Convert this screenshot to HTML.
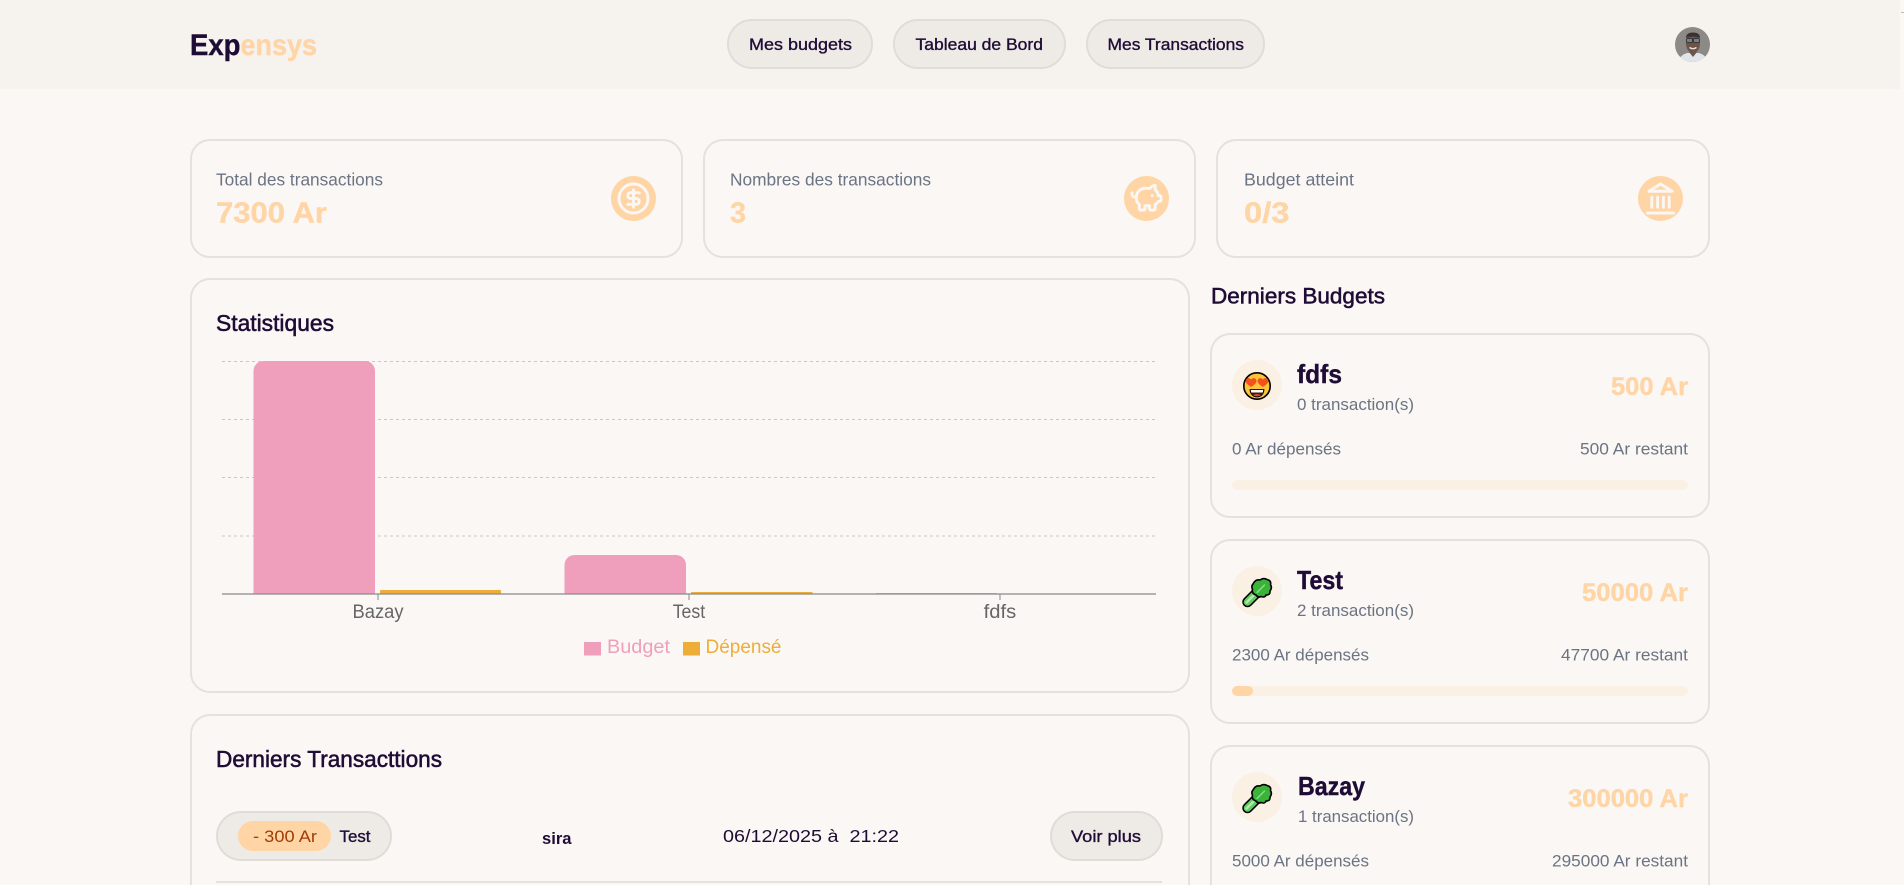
<!DOCTYPE html>
<html lang="fr">
<head>
<meta charset="utf-8">
<title>Expensys</title>
<style>
html,body{margin:0;padding:0;width:1904px;height:885px;overflow:hidden;background:#fbf7f4}
body{position:relative;font-family:"Liberation Sans",sans-serif}
.hdr{position:absolute;left:0;top:0;width:1900px;height:89px;background:#f6f2ee}
.card{position:absolute;box-sizing:border-box;border:2px solid #e5e1dc;border-radius:20px;background:#fbf7f4}
.btn{position:absolute;box-sizing:border-box;height:50px;border:2px solid #e0dcd7;border-radius:25px;background:#eeeae6}
.ic{position:absolute;border-radius:50%;background:#fbf0e4;width:50px;height:50px;left:1232px}
.bar{position:absolute;left:1232px;width:456px;height:10px;border-radius:5px;background:#fbf0e4}
.fill{position:absolute;left:0;top:0;height:10px;border-radius:5px;background:#ffd5a6}
.badge{position:absolute;left:238px;top:821px;width:93px;height:30px;border-radius:15px;background:#ffd5a6}
.div{position:absolute;left:216px;top:881px;width:946px;height:2px;background:#e5e1dc}
.tick{position:absolute;left:1901px;top:12px;width:3px;height:1px;background:#bbb}
svg.o{position:absolute;left:0;top:0;width:1904px;height:885px}
text{font-family:"Liberation Sans",sans-serif;white-space:pre}
.dk{fill:#1f0c36}.or{fill:#ffd5a6}.gr{fill:#6b7484}
.m{stroke:#1f0c36;stroke-width:.35px}
.t{stroke:#1f0c36;stroke-width:.55px}
.b{font-weight:700}
.bo{stroke:#ffd5a6;stroke-width:.4px}
.bd{stroke:#1f0c36;stroke-width:.4px}
.w{fill:none;stroke:#fbf7f4;stroke-width:2;stroke-linecap:round;stroke-linejoin:round}
</style>
</head>
<body>
<header class="hdr"></header>
<div class="tick"></div>

<div class="btn" style="left:727px;top:19px;width:146px"></div>
<div class="btn" style="left:893px;top:19px;width:173px"></div>
<div class="btn" style="left:1086px;top:19px;width:179px"></div>

<div class="card" style="left:190px;top:139px;width:493px;height:119px"></div>
<div class="card" style="left:703px;top:139px;width:493px;height:119px"></div>
<div class="card" style="left:1216px;top:139px;width:494px;height:119px"></div>

<div class="card" style="left:190px;top:278px;width:1000px;height:415px"></div>
<div class="card" style="left:190px;top:714px;width:1000px;height:171px;border-bottom:0;border-radius:20px 20px 0 0"></div>

<div class="card" style="left:1210px;top:333px;width:500px;height:185px"></div>
<div class="card" style="left:1210px;top:539px;width:500px;height:185px"></div>
<div class="card" style="left:1210px;top:745px;width:500px;height:140px;border-bottom:0;border-radius:20px 20px 0 0"></div>

<div class="ic" style="top:360px"></div>
<div class="ic" style="top:566px"></div>
<div class="ic" style="top:772px"></div>

<div class="bar" style="top:480px"></div>
<div class="bar" style="top:686px"><div class="fill" style="width:21px"></div></div>

<div class="btn" style="left:216px;top:811px;width:176px"></div>
<div class="badge"></div>
<div class="btn" style="left:1050px;top:811px;width:113px"></div>
<div class="div"></div>

<svg class="o" viewBox="0 0 1904 885" xmlns="http://www.w3.org/2000/svg">
<defs>
<g id="lettuce">
  <path d="M5 24 L15 14" stroke="#000" stroke-width="10.5" stroke-linecap="round" fill="none"/>
  <path d="M5 24 L15 14" stroke="#62cc62" stroke-width="7.5" stroke-linecap="round" fill="none"/>
  <path d="M4 24.5 L11 17.5" stroke="#b5e8ae" stroke-width="2.4" stroke-linecap="round" fill="none"/>
  <path d="M10.5 6 Q13 1 17.5 2 Q21 -.5 24.5 1.5 Q29 2.5 28 6.5 Q30 10 27.5 13 Q28 17 23.5 17 Q22.5 20 18.5 18.5 Q15.5 20 13.5 17 Q9 15.5 10 11.5 Q8.5 8 10.5 6Z" fill="#39b439" stroke="#000" stroke-width="1.6"/>
  <path d="M14.5 14.5 L22 7" stroke="#8fdc88" stroke-width="1.4" fill="none" stroke-linecap="round"/>
</g>
</defs>

<!-- logo -->
<text x="190" y="55" font-size="30" class="b dk bd" textLength="50.5" lengthAdjust="spacingAndGlyphs">Exp</text>
<text x="240.5" y="55" font-size="30" class="b or bo" textLength="76.5" lengthAdjust="spacingAndGlyphs">ensys</text>

<!-- nav -->
<text x="749" y="50" font-size="17" class="dk m" textLength="103" lengthAdjust="spacingAndGlyphs">Mes budgets</text>
<text x="915.5" y="50" font-size="17" class="dk m" textLength="127.5" lengthAdjust="spacingAndGlyphs">Tableau de Bord</text>
<text x="1107.5" y="50" font-size="17" class="dk m" textLength="136.5" lengthAdjust="spacingAndGlyphs">Mes Transactions</text>

<!-- avatar -->
<clipPath id="av"><circle cx="1692.5" cy="44.5" r="17.5"/></clipPath>
<g clip-path="url(#av)">
  <rect x="1675" y="27" width="35" height="35" fill="#8b8a87"/>
  <path d="M1678 62 Q1680 55 1687 53 L1699 53 Q1706 55 1708 62Z" fill="#dfe5ea"/>
  <path d="M1689 52 L1693 57 L1697 52Z" fill="#6d5449"/>
  <ellipse cx="1693" cy="43.5" rx="7" ry="9.5" fill="#6e5448"/>
  <path d="M1686 38 Q1686 32.5 1693 32.5 Q1700 32.5 1700 38 Q1693 35 1686 38Z" fill="#3a3230"/>
  <rect x="1686.5" y="38.5" width="6" height="4" rx="1.2" fill="#77808a" stroke="#2a2a2c" stroke-width=".8"/>
  <rect x="1693.5" y="38.5" width="6" height="4" rx="1.2" fill="#77808a" stroke="#2a2a2c" stroke-width=".8"/>
  <path d="M1689.5 47.5 Q1693 49.8 1696.5 47.5" stroke="#e9e2dc" stroke-width="1.4" fill="none"/>
</g>

<!-- stats -->
<text x="216" y="185.5" font-size="17.5" class="gr" textLength="167" lengthAdjust="spacingAndGlyphs">Total des transactions</text>
<text x="216" y="222.5" font-size="29" class="b or bo" textLength="111" lengthAdjust="spacingAndGlyphs">7300 Ar</text>
<text x="730" y="185.5" font-size="17.5" class="gr" textLength="201" lengthAdjust="spacingAndGlyphs">Nombres des transactions</text>
<text x="730" y="222.5" font-size="29" class="b or bo" textLength="16" lengthAdjust="spacingAndGlyphs">3</text>
<text x="1244" y="185.5" font-size="17.5" class="gr" textLength="110" lengthAdjust="spacingAndGlyphs">Budget atteint</text>
<text x="1244" y="222.5" font-size="29" class="b or bo" textLength="45.5" lengthAdjust="spacingAndGlyphs">0/3</text>

<circle cx="633.5" cy="198.5" r="22.5" fill="#ffd5a6"/>
<g class="w" transform="translate(616.1 181.1) scale(1.45)">
  <circle cx="12" cy="12" r="10"/>
  <path d="M16 8h-6a2 2 0 1 0 0 4h4a2 2 0 1 1 0 4H8"/>
  <path d="M12 18V6"/>
</g>
<circle cx="1146.5" cy="198.5" r="22.5" fill="#ffd5a6"/>
<g class="w" transform="translate(1129.1 181.1) scale(1.45)">
  <path d="M11 17h3v2a1 1 0 0 0 1 1h2a1 1 0 0 0 1-1v-3a3.16 3.16 0 0 0 2-2h1a1 1 0 0 0 1-1v-2a1 1 0 0 0-1-1h-1a5 5 0 0 0-2-4V3a4 4 0 0 0-3.2 1.6l-.3.4H11a6 6 0 0 0-6 6v1a5 5 0 0 0 2 4v3a1 1 0 0 0 1 1h2a1 1 0 0 0 1-1z"/>
  <path d="M16 10h.01"/>
  <path d="M2 8v1a2 2 0 0 0 2 2h1"/>
</g>
<circle cx="1660.5" cy="198.5" r="22.5" fill="#ffd5a6"/>
<g class="w" transform="translate(1643.1 181.1) scale(1.45)">
  <path d="M3 22h18"/>
  <path d="M6 18v-7"/><path d="M10 18v-7"/><path d="M14 18v-7"/><path d="M18 18v-7"/>
  <path d="M12 2l8 5H4z"/>
</g>

<!-- chart -->
<text x="216" y="331" font-size="23" class="dk t" textLength="118" lengthAdjust="spacingAndGlyphs">Statistiques</text>
<g stroke="#c8c8c8" stroke-width="1" stroke-dasharray="3 3">
  <path d="M222 361.5H1156M222 419.5H1156M222 477.5H1156M222 536H1156"/>
</g>
<path d="M253.5 594V371a10 10 0 0 1 10-10H365a10 10 0 0 1 10 10V594Z" fill="#ef9fbc"/>
<path d="M564.5 594V565a10 10 0 0 1 10-10H676a10 10 0 0 1 10 10V594Z" fill="#ef9fbc"/>
<path d="M380 594V591a1 1 0 0 1 1-1H500a1 1 0 0 1 1 1V594Z" fill="#edae38"/>
<path d="M691 594V592.5a.5 .5 0 0 1 .5-.5H812a.5 .5 0 0 1 .5 .5V594Z" fill="#edae38"/>
<rect x="876" y="593" width="121" height="1" fill="#ef9fbc"/>
<path d="M222 594H1156" stroke="#8a8a8a" stroke-width="1.2"/>
<path d="M378 594v6M689 594v6M1000 594v6" stroke="#8a8a8a" stroke-width="1"/>
<text x="352.5" y="618" font-size="19" fill="#666" textLength="51" lengthAdjust="spacingAndGlyphs">Bazay</text>
<text x="672.7" y="618" font-size="19" fill="#666" textLength="32.5" lengthAdjust="spacingAndGlyphs">Test</text>
<text x="983.7" y="618" font-size="19" fill="#666" textLength="32.5" lengthAdjust="spacingAndGlyphs">fdfs</text>
<rect x="584" y="642" width="17" height="13.5" fill="#ef9fbc"/>
<text x="607" y="653" font-size="19" fill="#ef9fbc" textLength="63" lengthAdjust="spacingAndGlyphs">Budget</text>
<rect x="683" y="642" width="17" height="13.5" fill="#edae38"/>
<text x="705.5" y="653" font-size="19" fill="#edae38" textLength="76" lengthAdjust="spacingAndGlyphs">Dépensé</text>

<!-- transactions -->
<text x="216" y="767" font-size="23" class="dk t" textLength="226" lengthAdjust="spacingAndGlyphs">Derniers Transacttions</text>
<text x="253" y="842" font-size="17" fill="#a13d09" textLength="64" lengthAdjust="spacingAndGlyphs">- 300 Ar</text>
<text x="339.5" y="842" font-size="17" class="dk m" textLength="31" lengthAdjust="spacingAndGlyphs">Test</text>
<text x="542" y="844" font-size="17" class="b dk" textLength="29.5" lengthAdjust="spacingAndGlyphs">sira</text>
<text x="723" y="842" font-size="17.5" class="dk" textLength="176" lengthAdjust="spacingAndGlyphs" xml:space="preserve">06/12/2025 à  21:22</text>
<text x="1071" y="842" font-size="17" class="dk m" textLength="70" lengthAdjust="spacingAndGlyphs">Voir plus</text>

<!-- budgets -->
<text x="1211" y="303.5" font-size="22.5" class="dk t" textLength="174" lengthAdjust="spacingAndGlyphs">Derniers Budgets</text>

<g>
  <circle cx="1257" cy="386" r="13.2" fill="#fbc43a" stroke="#000" stroke-width="1.6"/>
  <path d="M1245.7 381c0-3 4-4 5.4-1.4c1.4-2.6 5.4-1.6 5.4 1.4c0 2.6-3.3 4.4-5.4 6c-2.1-1.6-5.4-3.4-5.4-6Z" fill="#f4511e"/>
  <path d="M1257.5 381c0-3 4-4 5.4-1.4c1.4-2.6 5.4-1.6 5.4 1.4c0 2.6-3.3 4.4-5.4 6c-2.1-1.6-5.4-3.4-5.4-6Z" fill="#f4511e"/>
  <path d="M1250 389.5H1264C1263.8 394.5 1260.5 397 1257 397C1253.5 397 1250.2 394.5 1250 389.5Z" fill="#3a2010" stroke="#000" stroke-width=".8"/>
  <path d="M1250.8 390H1263.2L1262.8 392.5H1251.2Z" fill="#fff"/>
  <path d="M1253 395.2Q1257 392.8 1261 395.2Q1257 397.2 1253 395.2Z" fill="#e8402a"/>
  <text x="1297" y="383" font-size="26" class="b dk bd" textLength="45" lengthAdjust="spacingAndGlyphs">fdfs</text>
  <text x="1297" y="410" font-size="17" class="gr" textLength="117" lengthAdjust="spacingAndGlyphs">0 transaction(s)</text>
  <text x="1611" y="395" font-size="25" class="b or bo" textLength="77" lengthAdjust="spacingAndGlyphs">500 Ar</text>
  <text x="1232" y="454.5" font-size="17" class="gr" textLength="109" lengthAdjust="spacingAndGlyphs">0 Ar dépensés</text>
  <text x="1580" y="454.5" font-size="17" class="gr" textLength="108" lengthAdjust="spacingAndGlyphs">500 Ar restant</text>
</g>

<g>
  <use href="#lettuce" x="1242.5" y="578"/>
  <text x="1297" y="589" font-size="26" class="b dk bd" textLength="46" lengthAdjust="spacingAndGlyphs">Test</text>
  <text x="1297" y="616" font-size="17" class="gr" textLength="117" lengthAdjust="spacingAndGlyphs">2 transaction(s)</text>
  <text x="1582" y="601" font-size="25" class="b or bo" textLength="106" lengthAdjust="spacingAndGlyphs">50000 Ar</text>
  <text x="1232" y="660.5" font-size="17" class="gr" textLength="137" lengthAdjust="spacingAndGlyphs">2300 Ar dépensés</text>
  <text x="1561" y="660.5" font-size="17" class="gr" textLength="127" lengthAdjust="spacingAndGlyphs">47700 Ar restant</text>
</g>

<g>
  <use href="#lettuce" x="1242.5" y="784"/>
  <text x="1298" y="795" font-size="26" class="b dk bd" textLength="67" lengthAdjust="spacingAndGlyphs">Bazay</text>
  <text x="1298" y="822" font-size="17" class="gr" textLength="116" lengthAdjust="spacingAndGlyphs">1 transaction(s)</text>
  <text x="1568" y="807" font-size="25" class="b or bo" textLength="120" lengthAdjust="spacingAndGlyphs">300000 Ar</text>
  <text x="1232" y="866.5" font-size="17" class="gr" textLength="137" lengthAdjust="spacingAndGlyphs">5000 Ar dépensés</text>
  <text x="1552" y="866.5" font-size="17" class="gr" textLength="136" lengthAdjust="spacingAndGlyphs">295000 Ar restant</text>
</g>
</svg>
</body>
</html>
